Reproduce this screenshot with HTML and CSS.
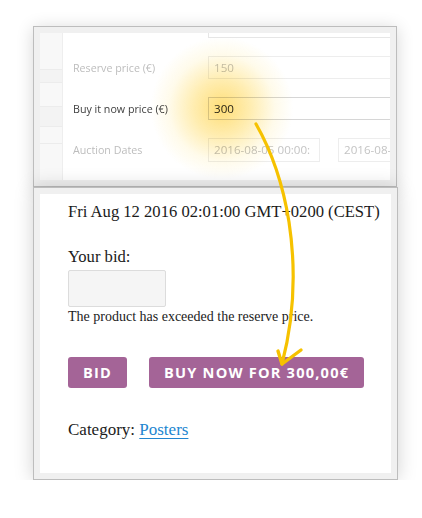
FILE: index.html
```
<!DOCTYPE html>
<html>
<head>
<meta charset="utf-8">
<link rel="stylesheet" href="styles.css">
</head>
<body>
<div class="stage">
  <div class="panel top-panel">
    <div class="panel-inner admin">
      <div class="sidebar">
        <div class="sb sb1"></div>
        <div class="sb sb2"></div>
        <div class="sb sb3"></div>
        <div class="sb sb4"></div>
        <div class="sb sb5"></div>
      </div>
      <div class="fields">
        <div class="row">
          <span class="label"></span>
          <span class="field wide"></span>
        </div>
        <div class="row">
          <span class="label muted">Reserve price (€)</span>
          <span class="field wide muted">150</span>
        </div>
        <div class="row">
          <span class="label">Buy it now price (€)</span>
          <span class="field wide active">300</span>
        </div>
        <div class="row">
          <span class="label muted">Auction Dates</span>
          <span class="field date-from muted">2016-08-05 00:00:</span>
          <span class="field date-to muted">2016-08-05 00:00:</span>
        </div>
      </div>
      <div class="glow"></div>
    </div>
  </div>
  <div class="panel bottom-panel">
    <div class="panel-inner product">
      <p class="end-date">Fri Aug 12 2016 02:01:00 GMT+0200 (CEST)</p>
      <p class="bid-label">Your bid:</p>
      <div class="bid-input"></div>
      <p class="note">The product has exceeded the reserve price.</p>
      <div class="buttons">
        <span class="btn">Bid</span>
        <span class="btn">Buy now for 300,00€</span>
      </div>
      <p class="category">Category: <a class="cat-link" href="#">Posters</a></p>
    </div>
  </div>
</div>
<svg class="arrow" width="422" height="518" viewBox="0 0 422 518">
  <path d="M256,124 C268,145 282,178 289,222 C296,268 294,318 282,364" fill="none" stroke="#f6c200" stroke-width="3.2" stroke-linecap="round"/>
  <path d="M278,351 L282,364 L301,350" fill="none" stroke="#f6c200" stroke-width="3.4" stroke-linecap="round" stroke-linejoin="round"/>
</svg>
</body>
</html>
```
FILE: styles.css
```
html, body {
  margin: 0;
  padding: 0;
  background: #ffffff;
}
.stage {
  padding: 26px 0 0 33px;
  width: 365px;
}
.panel {
  border: 1px solid #bdbdbd;
  background: #f0f0f0;
  padding: 6px;
  box-shadow: 0 2px 16px rgba(0, 0, 0, 0.16);
}
.top-panel {
  width: 350px;
  height: 147px;
}
.bottom-panel {
  position: relative;
  z-index: 2;
  width: 351px;
  height: 279px;
  box-shadow: 0 0 18px rgba(0, 0, 0, 0.18);
}
.panel-inner {
  background: #ffffff;
  height: 100%;
}
.admin {
  position: relative;
  display: flex;
  overflow: hidden;
  font-family: "Open Sans", sans-serif;
}
.sidebar {
  width: 22px;
  flex: none;
  background: #f8f8f8;
  border-right: 1px solid #eeeeee;
  display: flex;
  flex-direction: column;
}
.sb {
  border-bottom: 1px solid #ececec;
}
.sb1 { height: 36px; }
.sb2 { height: 12px; background: #f3f3f3; }
.sb3 { height: 23px; }
.sb4 { height: 19px; background: #f3f3f3; }
.sb5 { height: 16px; }
.fields {
  flex: 1;
  margin-top: -27px;
}
.row {
  height: 41px;
  display: flex;
  align-items: center;
  padding-left: 10px;
  box-sizing: border-box;
}
.label {
  width: 135px;
  flex: none;
  font-size: 10.7px;
  color: #3f3f3f;
}
.label.muted {
  color: #bdbdbd;
}
.field {
  flex: none;
  height: 23px;
  box-sizing: border-box;
  border: 1px solid #e6e6e6;
  font-size: 11.6px;
  line-height: 21px;
  padding-left: 5px;
  color: #333333;
  white-space: nowrap;
  overflow: hidden;
}
.field.muted {
  color: #c4c4c4;
  border-color: #ededed;
}
.field.wide {
  width: 220px;
}
.field.active {
  border-color: #d6d6d6;
  color: #2a2a2a;
}
.field.date-from {
  width: 112px;
  height: 24px;
}
.field.date-to {
  width: 112px;
  height: 24px;
  margin-left: 18px;
}
.glow {
  position: absolute;
  left: 110px;
  top: 3px;
  width: 144px;
  height: 144px;
  border-radius: 50%;
  background: radial-gradient(circle at center, rgba(255, 200, 30, 0.6) 0%, rgba(255, 210, 60, 0.4) 28%, rgba(255, 225, 110, 0.14) 52%, rgba(255, 240, 180, 0) 70%);
  mix-blend-mode: multiply;
  pointer-events: none;
}
.product {
  box-sizing: border-box;
  padding: 6px 0 0 28px;
  font-family: "Liberation Serif", "Times New Roman", serif;
  color: #1b1b1b;
}
.product p {
  margin: 0;
}
.end-date {
  font-size: 16.6px;
  line-height: 24px;
}
.product .bid-label {
  margin-top: 21px;
  font-size: 16.6px;
  line-height: 24px;
}
.bid-input {
  margin-top: 1px;
  width: 98px;
  height: 37px;
  box-sizing: border-box;
  border: 1px solid #dcdcdc;
  border-radius: 2px;
  background: #f5f5f5;
}
.product .note {
  font-size: 14px;
  line-height: 18px;
  margin-top: 1px;
}
.buttons {
  display: flex;
  gap: 22px;
  margin-top: 31px;
}
.btn {
  display: inline-block;
  height: 31px;
  line-height: 31px;
  padding: 0 15px;
  background: #a46497;
  border-radius: 3px;
  color: #ffffff;
  font-family: "Open Sans", sans-serif;
  font-weight: 700;
  font-size: 14.6px;
  letter-spacing: 1.2px;
  text-transform: uppercase;
}
.product .category {
  margin-top: 30px;
  font-size: 17px;
  line-height: 24px;
}
.cat-link {
  color: #2185d0;
  text-decoration: underline;
  text-underline-offset: 3px;
  text-decoration-thickness: 1px;
}
.arrow {
  position: absolute;
  left: 0;
  top: 0;
  z-index: 5;
  pointer-events: none;
}
```
